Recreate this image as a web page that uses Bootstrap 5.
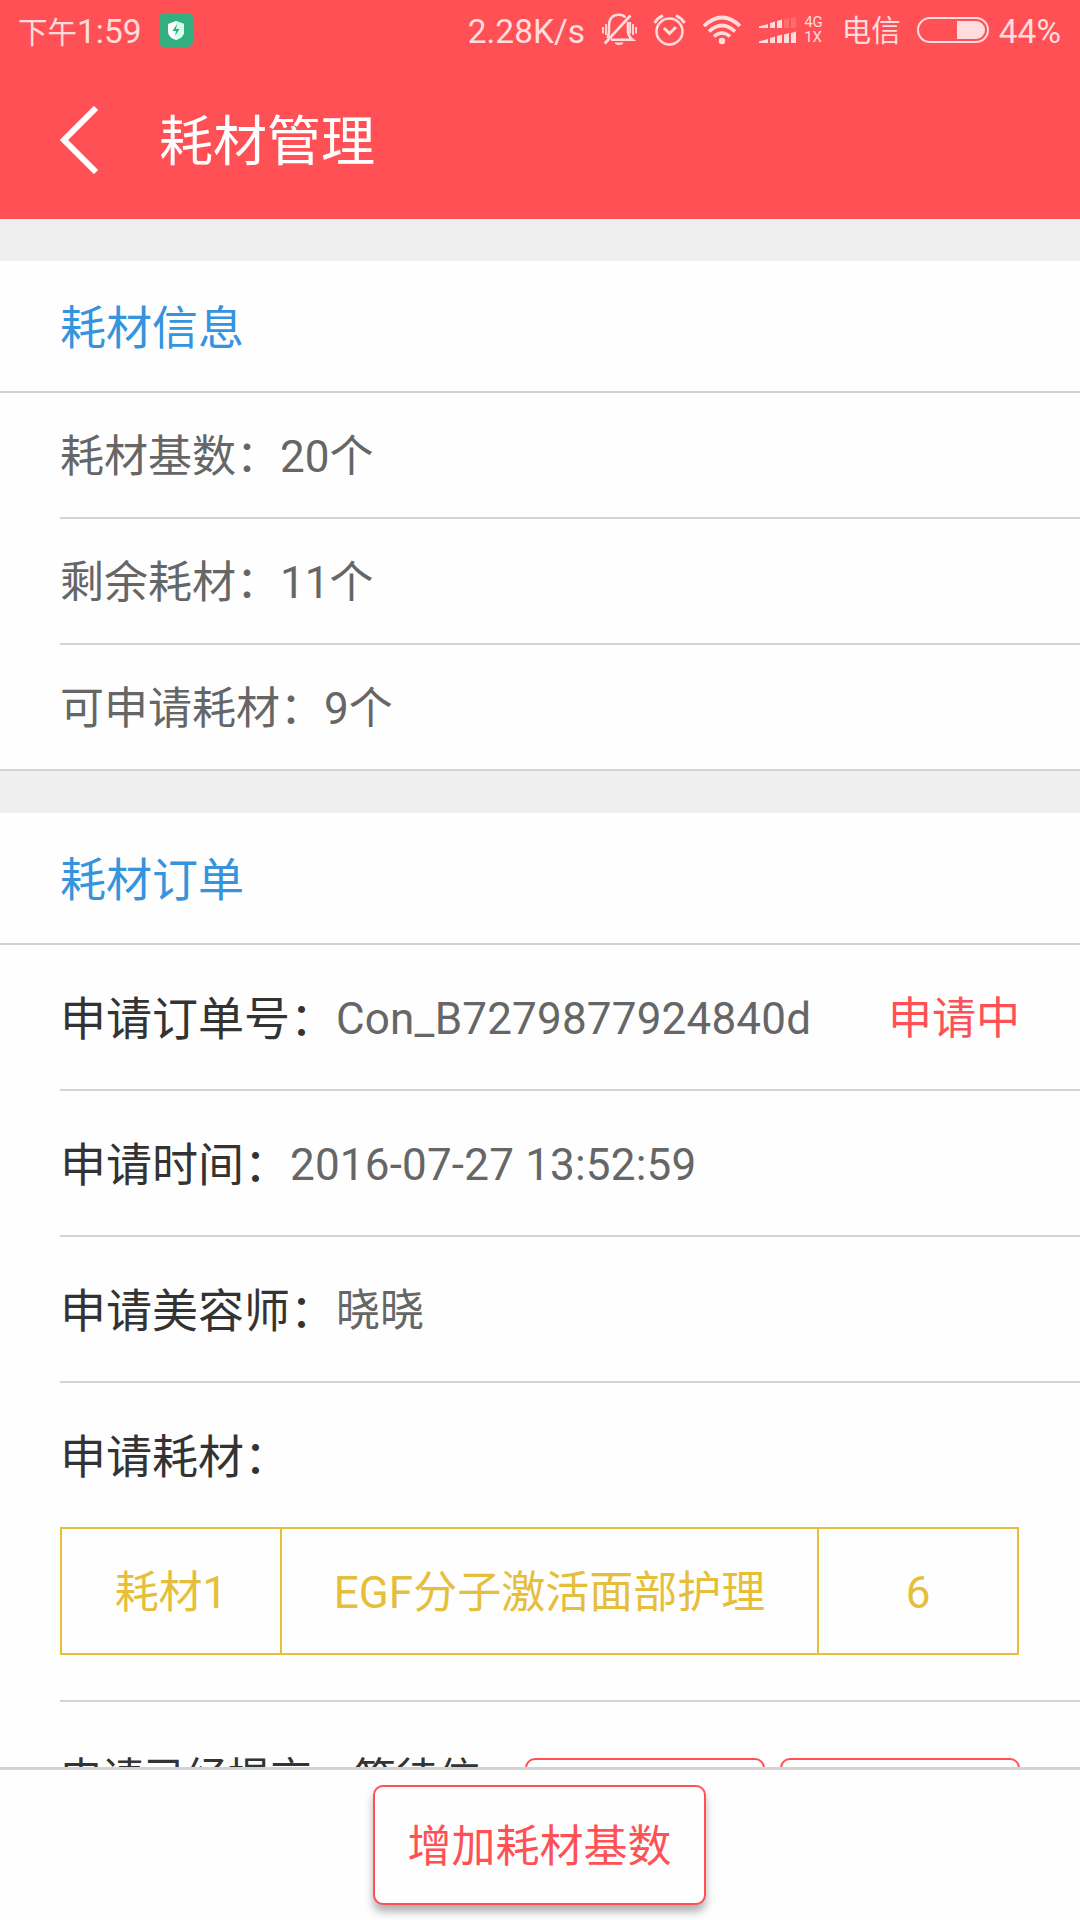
<!DOCTYPE html>
<html lang="zh-CN">
<head>
<meta charset="utf-8">
<meta name="viewport" content="width=device-width, initial-scale=1">
<title>耗材管理</title>
<link href="https://cdn.jsdelivr.net/npm/bootstrap@5.3.0/dist/css/bootstrap.min.css" rel="stylesheet">
<style>
:root{--brand:#ff5155;--rule:#d3d3d3;--gold:#e5bf3a}
body{font-family:Roboto,"Noto Sans CJK SC",sans-serif;font-size:44px;line-height:1;color:#666;background:#efefef}
.screen{width:1080px;height:1920px}
.app-head{background:var(--brand);height:219px}
.status{height:60px;font-size:33.5px;color:#ffdcdd;padding:0 19px 0 18px}
.status>span{padding-top:3px}
.status .cjk{font-size:29.5px}
.status svg,.app-head svg{display:block;flex:none}
.status .net{font-size:15px;line-height:15px;padding-top:0}
.title-row{height:159px;padding-left:60px}
.app-title{font-size:54px;margin-left:60px;font-weight:400;line-height:1;color:#fff;padding-top:6px}
.panel{background:#fefefe}
.panel-title{height:132px;padding:6px 0 0 60px;font-size:46px;color:#3693de;border-bottom:2px solid var(--rule);font-weight:400}
.line{margin-left:60px;border-bottom:2px solid var(--rule)}
.info .line{height:126px;padding-top:4px}
.info .line:last-child{margin-left:0;padding-left:60px}
.order .line{height:146px;padding:4px 60px 0 0}
.field{font-size:46px;color:#333}
.val{letter-spacing:.19px}
.order .materials{height:319px;padding-top:0}
.materials .field{height:144px;padding-top:4px}
.mat-table{border:2px solid var(--gold);height:128px;color:var(--gold);margin-right:1px}
.mat-table>div{padding-top:4px}
.mat-table>div+div{border-left:2px solid var(--gold)}
.c1{width:218px}.c3{width:200px}
.order .action{height:180px;padding:56px 60px 0 0;border:0;gap:15px}
.note{font-size:42px;line-height:42px;color:#333;width:450px}
.btn-brand{border:2px solid var(--brand);border-radius:10px;color:var(--brand);background:#fefefe;font-size:44px;line-height:1}
.action .btn-brand{width:240px;height:104px}
.foot{height:153px;border-top:3px solid var(--rule);background:#fefefe;padding:15px 1px 0 0}
.foot .btn-brand{width:333px;height:120px;box-shadow:0 7px 9px rgba(0,0,0,.3)}
.foot .btn-brand span{display:block;padding-top:3px}
</style>
</head>
<body>
<div class="screen d-flex flex-column overflow-hidden">
  <header class="app-head flex-shrink-0">
    <div class="status d-flex align-items-center">
      <span><span class="cjk">下午</span>1:59</span>
      <svg style="margin-left:17px" width="34" height="34" viewBox="0 0 34 34"><rect width="34" height="34" rx="5" fill="#33ae80"/><path d="M17 8l8 3v8q0 5-8 8-8-3-8-8v-8z" fill="#fff"/><path d="M17 8l8 3v8q0 5-8 8z" fill="#d5ffea"/><path d="M18 11l-4.500 7H17l-1 5 4.500-7H17z" fill="#33ae80"/></svg>
      <span class="ms-auto">2.28K/s</span>
      <svg style="margin-left:17px" width="36" height="34" viewBox="0 0 36 34" fill="none" stroke="#ffdcdd" stroke-width="1.800"><path d="M5.500 25q1.500-3 1.500-7v-5Q7 1.700 17 1.700q4 0 6.500 2.600M26 9v9q0 5 4.500 8.700H9M2.700 30.500L28.500 2.500" stroke-width="2.600"/><path d="M1 14v6.500M4 11v11M28.200 9v11.500M31 11v11M34 14v6.500"/><path d="M12.500 29.500h9q-1 2.500-4.500 2.500t-4.500-2.500z" fill="#ffdcdd" stroke="none"/></svg>
      <svg style="margin-left:15px" width="34" height="34" viewBox="0 0 34 34" fill="none" stroke="#ffdcdd" stroke-width="2.500"><circle cx="16.500" cy="18.500" r="13"/><path d="M11 15l5.500 5.500L23 14M1.500 10q3-5 8.500-7.500M23 2.500q5.500 2.500 8.500 7.500" stroke-width="3"/></svg>
      <svg style="margin-left:15px" width="40" height="30" viewBox="0 0 40 30" fill="none" stroke="#ffdcdd" stroke-width="3.600"><path d="M2 11q18-17 36 0M7 16.500q13-12 26 0M12 21.500q8-7 16 0"/><circle cx="20" cy="26" r="3.200" fill="#ffdcdd" stroke="none"/></svg>
      <svg style="margin-left:17px" width="37" height="28" viewBox="0 0 37 28" fill="#ffdcdd"><path d="M0 12v-1.500L9 8v4zM11 12V7l5-1.500V12zM18 12V5l5-1.500V12zM0 27v-1.500L9 23v4zM11 27v-5l5-1.500V27zM18 27v-7l5-1.500V27zM25 27v-8.500l5-1.500v10zM32 27V17l5-1.500V27z"/><path d="M25 12V3.500L30 2v10zM32 12V2l5-1.500V12z" opacity=".2"/></svg>
      <span class="net" style="margin-left:8px">4G<br>1X</span>
      <span class="cjk" style="margin-left:19px">电信</span>
      <svg style="margin-left:16px" width="72" height="26" viewBox="0 0 72 26"><rect x="1" y="1" width="70" height="24" rx="12" fill="none" stroke="#ffdcdd" stroke-width="2"/><path d="M40 4h19a9 9 0 010 18H40z" fill="#ffdcdd"/></svg>
      <span style="margin-left:10px">44%</span>
    </div>
    <div class="title-row d-flex align-items-center">
      <svg width="39" height="68" viewBox="0 0 39 68"><path d="M36 2L4 34l32 32" fill="none" stroke="#fff" stroke-width="6"/></svg>
      <h1 class="app-title mb-0">耗材管理</h1>
    </div>
  </header>
  <main class="flex-grow-1 overflow-hidden">
    <section class="panel info" style="margin-top:42px">
      <h2 class="panel-title d-flex align-items-center mb-0">耗材信息</h2>
      <div class="line d-flex align-items-center">耗材基数：20个</div>
      <div class="line d-flex align-items-center">剩余耗材：11个</div>
      <div class="line d-flex align-items-center">可申请耗材：9个</div>
    </section>
    <section class="panel order" style="margin-top:42px">
      <h2 class="panel-title d-flex align-items-center mb-0">耗材订单</h2>
      <div class="line d-flex align-items-center"><span class="field">申请订单号：</span><span class="val">Con_B7279877924840d</span><span class="ms-auto" style="color:var(--brand)">申请中</span></div>
      <div class="line d-flex align-items-center"><span class="field">申请时间：</span><span class="val">2016-07-27 13:52:59</span></div>
      <div class="line d-flex align-items-center"><span class="field">申请美容师：</span><span>晓晓</span></div>
      <div class="line materials">
        <div class="field d-flex align-items-center">申请耗材：</div>
        <div class="mat-table d-flex text-center">
          <div class="c1 d-flex align-items-center justify-content-center">耗材1</div>
          <div class="flex-grow-1 d-flex align-items-center justify-content-center">EGF分子激活面部护理</div>
          <div class="c3 d-flex align-items-center justify-content-center">6</div>
        </div>
      </div>
      <div class="line action d-flex">
        <div class="note">申请已经提交，等待信</div>
        <button class="btn btn-brand"></button>
        <button class="btn btn-brand"></button>
      </div>
    </section>
  </main>
  <footer class="foot flex-shrink-0 text-center"><button class="btn btn-brand p-0"><span>增加耗材基数</span></button></footer>
</div>
<script src="https://cdn.jsdelivr.net/npm/bootstrap@5.3.0/dist/js/bootstrap.bundle.min.js"></script>
</body>
</html>
